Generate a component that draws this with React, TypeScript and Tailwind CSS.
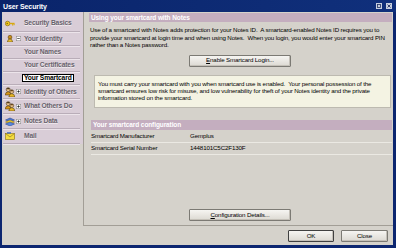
import React from 'react'

// ─── Icons ───────────────────────────────────────────────────

function KeyIcon() {
  return (
    <svg width="10" height="7" viewBox="0 0 10 7">
      <circle cx="2.6" cy="3.5" r="2.3" fill="#f0c818" stroke="#7a5c08" strokeWidth="0.6" />
      <circle cx="2.2" cy="3.5" r="0.7" fill="#7a5c08" />
      <rect x="4.6" y="2.8" width="5" height="1.4" fill="#d8a810" />
      <rect x="7.2" y="4" width="1" height="1.6" fill="#d8a810" />
      <rect x="8.6" y="4" width="1" height="1.2" fill="#d8a810" />
    </svg>
  )
}

function PersonIcon() {
  return (
    <svg width="6" height="7" viewBox="0 0 6 7">
      <circle cx="3" cy="2.2" r="1.9" fill="#c89018" stroke="#4a3006" strokeWidth="0.5" />
      <path d="M0.4 7 Q0.6 4 3 4 Q5.4 4 5.6 7 Z" fill="#e8c030" stroke="#4a3006" strokeWidth="0.5" />
    </svg>
  )
}

function PeopleIcon() {
  return (
    <svg width="10" height="10" viewBox="0 0 10 10">
      <circle cx="3.2" cy="2.6" r="2" fill="#f0c890" stroke="#3a2a10" strokeWidth="0.5" />
      <path d="M1.2 2.2 Q3.2 -0.2 5.2 2.2 Z" fill="#3a2a10" />
      <path d="M0.2 8 Q0.4 4.8 3.2 4.8 Q6 4.8 6.2 8 Z" fill="#d89818" stroke="#3a2a10" strokeWidth="0.5" />
      <circle cx="6.8" cy="4.6" r="1.9" fill="#f0c890" stroke="#3a2a10" strokeWidth="0.5" />
      <path d="M4.9 4.2 Q6.8 2 8.7 4.2 Z" fill="#5a3a10" />
      <path d="M3.8 10 Q4 6.7 6.8 6.7 Q9.6 6.7 9.8 10 Z" fill="#e8b828" stroke="#3a2a10" strokeWidth="0.5" />
    </svg>
  )
}

function DataIcon() {
  return (
    <svg width="10" height="9" viewBox="0 0 10 9">
      <path d="M0.5 3 L5 1 L9.5 3 L5 5 Z" fill="#4a78d8" stroke="#1a3880" strokeWidth="0.5" />
      <path d="M0.5 5 L5 3 L9.5 5 L5 7 Z" fill="#f0d030" stroke="#806010" strokeWidth="0.5" />
      <path d="M0.5 7 L5 5 L9.5 7 L5 9 Z" fill="#5a88e0" stroke="#1a3880" strokeWidth="0.5" />
    </svg>
  )
}

function MailIcon() {
  return (
    <svg width="10" height="8" viewBox="0 0 10 8">
      <rect x="0.5" y="1.5" width="9" height="6" fill="#f4dc40" stroke="#8a7010" strokeWidth="0.6" />
      <path d="M0.5 1.5 L5 5 L9.5 1.5" fill="none" stroke="#8a7010" strokeWidth="0.6" />
      <rect x="2" y="0.3" width="4" height="1.2" fill="#3060c0" />
    </svg>
  )
}

function Expander({ open }: { open: boolean }) {
  return (
    <svg width="5" height="5" viewBox="0 0 5 5">
      <rect x="0.25" y="0.25" width="4.5" height="4.5" fill="#fff" stroke="#808080" strokeWidth="0.5" />
      <rect x="1.2" y="2.2" width="2.6" height="0.6" fill="#000" />
      {!open && <rect x="2.2" y="1.2" width="0.6" height="2.6" fill="#000" />}
    </svg>
  )
}

// ─── Nav ─────────────────────────────────────────────────────

interface NavRow {
  label: string
  h: string
  icon?: React.ReactNode
  expander?: 'open' | 'closed'
  selected?: boolean
}

const NAV: NavRow[] = [
  { label: 'Security Basics', h: 'h-[17px]', icon: <KeyIcon /> },
  { label: 'Your Identity', h: 'h-[14px]', icon: <PersonIcon />, expander: 'open' },
  { label: 'Your Names', h: 'h-[13px]' },
  { label: 'Your Certificates', h: 'h-[13px]' },
  { label: 'Your Smartcard', h: 'h-[13px]', selected: true },
  { label: 'Identity of Others', h: 'h-[14px]', icon: <PeopleIcon />, expander: 'closed' },
  { label: 'What Others Do', h: 'h-[15px]', icon: <PeopleIcon />, expander: 'closed' },
  { label: 'Notes Data', h: 'h-[15px]', icon: <DataIcon />, expander: 'closed' },
  { label: 'Mail', h: 'h-[15px]', icon: <MailIcon /> },
]

function Nav() {
  return (
    <div className="w-[80px] ml-px self-start h-[132px] bg-[#d9cdd7] pt-[3px] flex flex-col">
      {NAV.map(row => (
        <div key={row.label} className={`${row.h} mr-[3px] flex items-center border-b border-[#b9adb8] shadow-[0_1px_0_#ece4ea]`}>
          <div className="w-[13px] pl-px flex items-center justify-center">{row.icon}</div>
          <div className="w-[8px] flex items-center">{row.expander && <Expander open={row.expander === 'open'} />}</div>
          {row.selected ? (
            <span className="bg-white border border-black px-px leading-[6px] h-[8px] text-[6.7px] tracking-[-0.15px] font-bold text-black -ml-[2px] whitespace-nowrap">{row.label}</span>
          ) : (
            <span className="text-[6.7px] tracking-[-0.15px] font-bold text-[#67626b] leading-[8px] whitespace-nowrap [text-shadow:0_1px_0_#f2ecf0]">{row.label}</span>
          )}
        </div>
      ))}
    </div>
  )
}

// ─── Buttons ─────────────────────────────────────────────────

function Btn({ children, w, strong }: { children: React.ReactNode; w: string; strong?: boolean }) {
  return (
    <div className={`${w} h-[12px] flex items-center justify-center rounded-[1px] border ${strong ? 'border-[#404040]' : 'border-[#7c7a74]'} bg-gradient-to-b from-[#f6f5f2] to-[#dcd9d2] text-[6.2px] tracking-[-0.15px] leading-none text-black shadow-[inset_-1px_-1px_0_#c4c0b8] whitespace-nowrap`}>
      {children}
    </div>
  )
}

// ─── Main ────────────────────────────────────────────────────

export default function App() {
  return (
    <div className="w-[396px] h-[248px] bg-[#0c2670] flex flex-col font-['Liberation_Sans',Arial,sans-serif] overflow-hidden">
      {/* title bar */}
      <div className="h-[12px] flex items-center pl-[3px] pr-[4px] bg-gradient-to-r from-[#0a246a] to-[#10307c]">
        <span className="text-white font-bold text-[7px] tracking-[-0.1px] leading-none">User Security</span>
        <div className="ml-auto flex gap-[4px]">
          <div className="w-[6px] h-[6px] bg-[#c8d0e0] flex items-center justify-center">
            <svg width="4" height="4" viewBox="0 0 4 4"><rect x="0.5" y="0.5" width="3" height="3" fill="none" stroke="#203060" strokeWidth="0.8" /></svg>
          </div>
          <div className="w-[6px] h-[6px] bg-[#c8d0e0] flex items-center justify-center">
            <svg width="4" height="4" viewBox="0 0 4 4"><path d="M0.5 0.5 L3.5 3.5 M3.5 0.5 L0.5 3.5" stroke="#203060" strokeWidth="0.9" /></svg>
          </div>
        </div>
      </div>

      {/* body */}
      <div className="flex-1 ml-[2px] mr-[3px] mb-[3px] bg-[#d5d2cb] flex flex-col">
        <div className="flex h-[214px]">
          <Nav />

          {/* right panel */}
          <div className="flex-1 min-w-0 flex flex-col border-l border-b border-[#a29e96] pl-[5px] pr-[1px] pt-px text-[6.2px] tracking-[-0.15px] text-black">
            <div className="h-[9px] bg-[#c4aebf] text-white font-bold text-[6.5px] tracking-[-0.1px] leading-[9px] px-[2px]">Using your smartcard with Notes</div>

            <div className="mt-[4px] pl-px leading-[7.5px] whitespace-pre">
              <div>Use of a smartcard with Notes adds protection for your Notes ID.  A smartcard-enabled Notes ID requires you to</div>
              <div>provide your smartcard at login time and when using Notes.  When you login, you would enter your smartcard PIN</div>
              <div>rather than a Notes password.</div>
            </div>

            <div className="mt-[6px] ml-[100px]">
              <Btn w="w-[102px]"><span><span className="underline">E</span>nable Smartcard Login...</span></Btn>
            </div>

            <div className="mt-[8px] ml-[5px] mr-px h-[33px] bg-[#f4f3e3] border border-[#bdbab0] pl-[3px] pt-[4px] leading-[7.2px] whitespace-pre">
              <div>You must carry your smartcard with you when smartcard use is enabled.  Your personal possession of the</div>
              <div>smartcard ensures low risk for misuse, and low vulnerability for theft of your Notes identity and the private</div>
              <div>information stored on the smartcard.</div>
            </div>

            <div className="mt-[12px] ml-[2px] h-[10px] bg-[#c4aebf] text-white font-bold text-[6.5px] tracking-[-0.1px] leading-[10px] px-[2px]">Your smartcard configuration</div>

            <div className="ml-[2px] mt-px">
              <div className="h-[12px] flex items-center border-b border-[#ebe9e3]">
                <span className="w-[99px]">Smartcard Manufacturer</span>
                <span>Gemplus</span>
              </div>
              <div className="h-[12px] flex items-center border-b border-[#ebe9e3]">
                <span className="w-[99px]">Smartcard Serial Number</span>
                <span>1448101C5C2F130F</span>
              </div>
            </div>

            <div className="mt-auto mb-[4px] ml-[100px]">
              <Btn w="w-[102px]"><span><span className="underline">C</span>onfiguration Details...</span></Btn>
            </div>
          </div>
        </div>

        {/* footer */}
        <div className="flex justify-end gap-[7px] pt-[4px] pr-[5px]">
          <Btn w="w-[46px]" strong>OK</Btn>
          <Btn w="w-[47px]">Close</Btn>
        </div>
      </div>
    </div>
  )
}
